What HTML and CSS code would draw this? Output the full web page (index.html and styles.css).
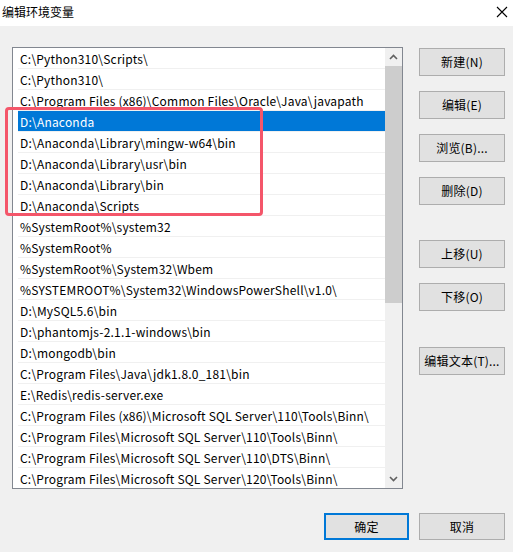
FILE: index.html
```html
<!DOCTYPE html>
<html lang="zh-CN">
<head>
<meta charset="utf-8">
<title>编辑环境变量</title>
<link rel="stylesheet" href="styles.css">
</head>
<body>
<div class="window">
  <div class="titlebar">
    <span class="title">编辑环境变量</span>
    <svg class="close" width="12" height="12" viewBox="0 0 12 12"><path d="M1 1 L11 11 M11 1 L1 11" stroke="#000" stroke-width="1.1" fill="none"/></svg>
  </div>

  <div class="main">
    <div class="listbox">
      <ul class="rows">
        <li class="row">C:\Python310\Scripts\</li>
        <li class="row">C:\Python310\</li>
        <li class="row">C:\Program Files (x86)\Common Files\Oracle\Java\javapath</li>
        <li class="row selected">D:\Anaconda</li>
        <li class="row">D:\Anaconda\Library\mingw-w64\bin</li>
        <li class="row">D:\Anaconda\Library\usr\bin</li>
        <li class="row">D:\Anaconda\Library\bin</li>
        <li class="row">D:\Anaconda\Scripts</li>
        <li class="row">%SystemRoot%\system32</li>
        <li class="row">%SystemRoot%</li>
        <li class="row">%SystemRoot%\System32\Wbem</li>
        <li class="row">%SYSTEMROOT%\System32\WindowsPowerShell\v1.0\</li>
        <li class="row">D:\MySQL5.6\bin</li>
        <li class="row">D:\phantomjs-2.1.1-windows\bin</li>
        <li class="row">D:\mongodb\bin</li>
        <li class="row">C:\Program Files\Java\jdk1.8.0_181\bin</li>
        <li class="row">E:\Redis\redis-server.exe</li>
        <li class="row">C:\Program Files (x86)\Microsoft SQL Server\110\Tools\Binn\</li>
        <li class="row">C:\Program Files\Microsoft SQL Server\110\Tools\Binn\</li>
        <li class="row">C:\Program Files\Microsoft SQL Server\110\DTS\Binn\</li>
        <li class="row">C:\Program Files\Microsoft SQL Server\120\Tools\Binn\</li>
      </ul>
      <div class="scrollbar">
        <div class="arrow">
          <svg width="9" height="6" viewBox="0 0 9 6"><path d="M1 5 L4.5 1.5 L8 5" stroke="#606060" stroke-width="1.6" fill="none"/></svg>
        </div>
        <div class="thumb"></div>
        <div class="track"></div>
        <div class="arrow">
          <svg width="9" height="6" viewBox="0 0 9 6"><path d="M1 1 L4.5 4.5 L8 1" stroke="#606060" stroke-width="1.6" fill="none"/></svg>
        </div>
      </div>
    </div>

    <div class="actions">
      <button class="btn">新建(N)</button>
      <button class="btn">编辑(E)</button>
      <button class="btn">浏览(B)...</button>
      <button class="btn">删除(D)</button>
      <button class="btn group-start">上移(U)</button>
      <button class="btn">下移(O)</button>
      <button class="btn group-start wide">编辑文本(T)...</button>
    </div>
  </div>

  <div class="footer">
    <button class="btn default">确定</button>
    <button class="btn">取消</button>
  </div>

  <div class="mark"></div>
</div>
</body>
</html>
```

FILE: styles.css
```css
* { box-sizing: border-box; }

html, body {
  margin: 0;
  padding: 0;
  background: #f0f0f0;
}

body {
  font-family: "Noto Sans CJK SC", "Noto Sans", sans-serif;
  font-size: 12px;
  color: #000;
}

.window {
  position: relative;
  width: 513px;
  height: 552px;
  overflow: hidden;
}

/* title bar */
.titlebar {
  height: 26px;
  background: #fff;
  display: flex;
  align-items: center;
  justify-content: space-between;
  padding: 0 5px 2px 2px;
}

.title {
  font-size: 12px;
  line-height: 16px;
}

.close {
  display: block;
}

/* list + side buttons */
.main {
  display: flex;
  gap: 16px;
  padding: 21px 0 0 12px;
}

.listbox {
  width: 391px;
  height: 442px;
  border: 1px solid #828790;
  background: #fff;
  display: flex;
}

.rows {
  flex: 1;
  margin: 0;
  padding: 0 0 0 5px;
  list-style: none;
  overflow: hidden;
}

.row {
  height: 21px;
  line-height: 21px;
  padding-left: 2px;
  border-bottom: 1px solid #f0f0f0;
  white-space: nowrap;
  overflow: hidden;
  letter-spacing: 0.2px;
}

.row.selected {
  background: #0078d7;
  color: #fff;
}

.scrollbar {
  width: 17px;
  background: #f0f0f0;
  display: flex;
  flex-direction: column;
}

.arrow {
  height: 18px;
  display: flex;
  align-items: center;
  justify-content: center;
}

.thumb {
  height: 237px;
  background: #cdcdcd;
}

.track {
  flex: 1;
}

.actions {
  width: 86px;
  display: flex;
  flex-direction: column;
  gap: 15px;
  padding-top: 1px;
}

.btn {
  width: 86px;
  height: 28px;
  margin: 0;
  padding: 0 0 1px;
  background: #e1e1e1;
  border: 1px solid #adadad;
  font-family: inherit;
  font-size: 12px;
  letter-spacing: 0.2px;
  color: #000;
  text-align: center;
}

.actions .group-start {
  margin-top: 20px;
}

.actions .wide {
  margin-top: 21px;
}

/* dialog footer */
.footer {
  display: flex;
  justify-content: flex-end;
  gap: 10px;
  padding: 24px 8px 0 0;
}

.footer .btn {
  height: 27px;
}

.btn.default {
  width: 85px;
  border: 2px solid #0078d7;
}

/* annotation frame around the Anaconda entries */
.mark {
  position: absolute;
  left: 5px;
  top: 107px;
  width: 258px;
  height: 109px;
  border: 3px solid #f4566a;
  border-radius: 4px;
  pointer-events: none;
}
```
